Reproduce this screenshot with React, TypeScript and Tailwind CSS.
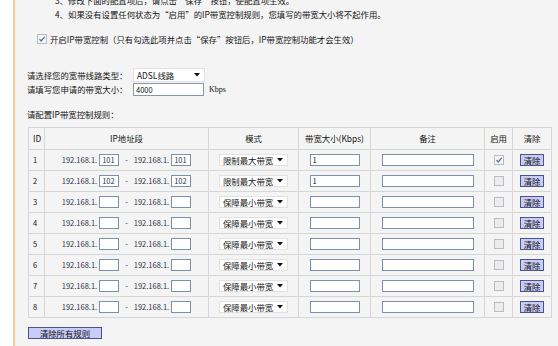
import React from "react";

const rows = [
  { id: 1, from: "101", to: "101", mode: "限制最大带宽", bw: "1", on: true },
  { id: 2, from: "102", to: "102", mode: "限制最大带宽", bw: "1", on: false },
  { id: 3, from: "", to: "", mode: "保障最小带宽", bw: "", on: false },
  { id: 4, from: "", to: "", mode: "保障最小带宽", bw: "", on: false },
  { id: 5, from: "", to: "", mode: "保障最小带宽", bw: "", on: false },
  { id: 6, from: "", to: "", mode: "保障最小带宽", bw: "", on: false },
  { id: 7, from: "", to: "", mode: "保障最小带宽", bw: "", on: false },
  { id: 8, from: "", to: "", mode: "保障最小带宽", bw: "", on: false },
];

const Box = ({ on }: { on: boolean }) => (
  <svg width="10" height="10" viewBox="0 0 10 10" className="block">
    <rect x="0.5" y="0.5" width="9" height="9" fill={on ? "#f4f4f4" : "#ececec"} stroke="#b8bcc4" />
    {on && <path d="M2.5 5.2 L4.2 7 L7.6 2.8" fill="none" stroke="#5a6e94" strokeWidth="1.2" />}
  </svg>
);

const Arrow = () => (
  <svg width="6" height="4" viewBox="0 0 6 4" className="block">
    <path d="M0 0 H6 L3 3.5 Z" fill="#111" />
  </svg>
);

const Select = ({ value, w }: { value: string; w: string }) => (
  <div className={`flex h-[12px] items-center justify-between border border-[#e2e2e2] bg-white pl-[3px] pr-[4px] ${w}`}>
    <span className="leading-[10px]">{value}</span>
    <Arrow />
  </div>
);

const Field = ({ value, w }: { value: string; w: string }) => (
  <div className={`h-[12px] border border-[#7f8fa8] bg-white pl-[2px] text-[7.5px] leading-[10px] ${w}`}>{value}</div>
);

const Btn = ({ label, w }: { label: string; w: string }) => (
  <div className={`flex h-[12px] items-center justify-center border border-[#4a5488] bg-[#c9ccf6] leading-[10px] text-[#111] ${w}`}>
    {label}
  </div>
);

export default function App() {
  return (
    <div className="flex h-[346px] w-[558px] overflow-hidden bg-[#f4f4f4] font-[Noto_Sans_CJK_SC,sans-serif] text-[8.4px] text-[#151515]">
      <div className="w-[13px] shrink-0 bg-white" />
      <div className="w-[2px] shrink-0 bg-[#f2cc96]" />
      <div className="flex-1 pl-[12px]">
        <div className="-mt-[6px] h-[13px] pl-[28px] leading-[13px]">3、修改下面的配置项后，请点击“保存”按钮，使配置项生效。</div>
        <div className="mt-[1px] h-[13px] pl-[28px] leading-[13px]">4、如果没有设置任何状态为“启用”的IP带宽控制规则，您填写的带宽大小将不起作用。</div>

        <div className="mt-[12px] flex h-[12px] items-center gap-[3px] pl-[10px]">
          <Box on />
          <span>开启IP带宽控制（只有勾选此项并点击“保存”按钮后，IP带宽控制功能才会生效）</span>
        </div>

        <div className="mt-[23px] flex h-[14px] items-center">
          <span className="w-[106px]">请选择您的宽带线路类型：</span>
          <div className="flex h-[14px] w-[72px] items-center justify-between border border-[#e2e2e2] bg-white pl-[3px] pr-[4px]">
            <span>ADSL线路</span>
            <Arrow />
          </div>
        </div>
        <div className="mt-[1px] flex h-[13px] items-center">
          <span className="w-[106px]">请填写您申请的带宽大小：</span>
          <div className="h-[13px] w-[71px] border border-[#8b96a8] bg-white pl-[2px] text-[7.5px] leading-[11px]">4000</div>
          <span className="ml-[5px] font-[Liberation_Serif,serif] text-[8px]">Kbps</span>
        </div>

        <div className="mt-[12px] h-[13px] leading-[13px]">请配置IP带宽控制规则：</div>

        <table className="ml-[1px] mt-[6px] w-[523px] table-fixed border border-[#c4c4c4]">
          <colgroup>
            <col className="w-[16px]" />
            <col className="w-[164px]" />
            <col className="w-[90px]" />
            <col className="w-[72px]" />
            <col className="w-[114px]" />
            <col className="w-[28px]" />
            <col className="w-[39px]" />
          </colgroup>
          <thead>
            <tr className="h-[22px]">
              <th className="border border-[#d6d6d6] pl-[4px] text-left font-normal">ID</th>
              <th className="border border-[#d6d6d6] font-normal">IP地址段</th>
              <th className="border border-[#d6d6d6] font-normal">模式</th>
              <th className="border border-[#d6d6d6] font-normal">带宽大小(Kbps)</th>
              <th className="border border-[#d6d6d6] font-normal">备注</th>
              <th className="border border-[#d6d6d6] font-normal">启用</th>
              <th className="border border-[#d6d6d6] font-normal">清除</th>
            </tr>
          </thead>
          <tbody>
            {rows.map((r) => (
              <tr key={r.id} className="h-[21px]">
                <td className="border border-[#d6d6d6] pl-[4px] text-[7.5px]">{r.id}</td>
                <td className="border border-[#d6d6d6]">
                  <div className="flex items-center justify-center gap-[2px] text-[7.5px] text-[#2c3548]">
                    <span>192.168.1.</span>
                    <Field value={r.from} w="w-[20px]" />
                    <span className="mx-[4px]">-</span>
                    <span>192.168.1.</span>
                    <Field value={r.to} w="w-[20px]" />
                  </div>
                </td>
                <td className="border border-[#d6d6d6]">
                  <div className="flex justify-center">
                    <Select value={r.mode} w="w-[69px]" />
                  </div>
                </td>
                <td className="border border-[#d6d6d6]">
                  <div className="flex justify-center">
                    <Field value={r.bw} w="w-[50px]" />
                  </div>
                </td>
                <td className="border border-[#d6d6d6]">
                  <div className="flex justify-center">
                    <Field value="" w="w-[92px]" />
                  </div>
                </td>
                <td className="border border-[#d6d6d6]">
                  <div className="flex justify-center">
                    <Box on={r.on} />
                  </div>
                </td>
                <td className="border border-[#d6d6d6]">
                  <div className="flex justify-center">
                    <Btn label="清除" w="w-[24px]" />
                  </div>
                </td>
              </tr>
            ))}
          </tbody>
        </table>

        <div className="ml-[1px] mt-[9px]">
          <Btn label="清除所有规则" w="w-[74px]" />
        </div>
      </div>
    </div>
  );
}
